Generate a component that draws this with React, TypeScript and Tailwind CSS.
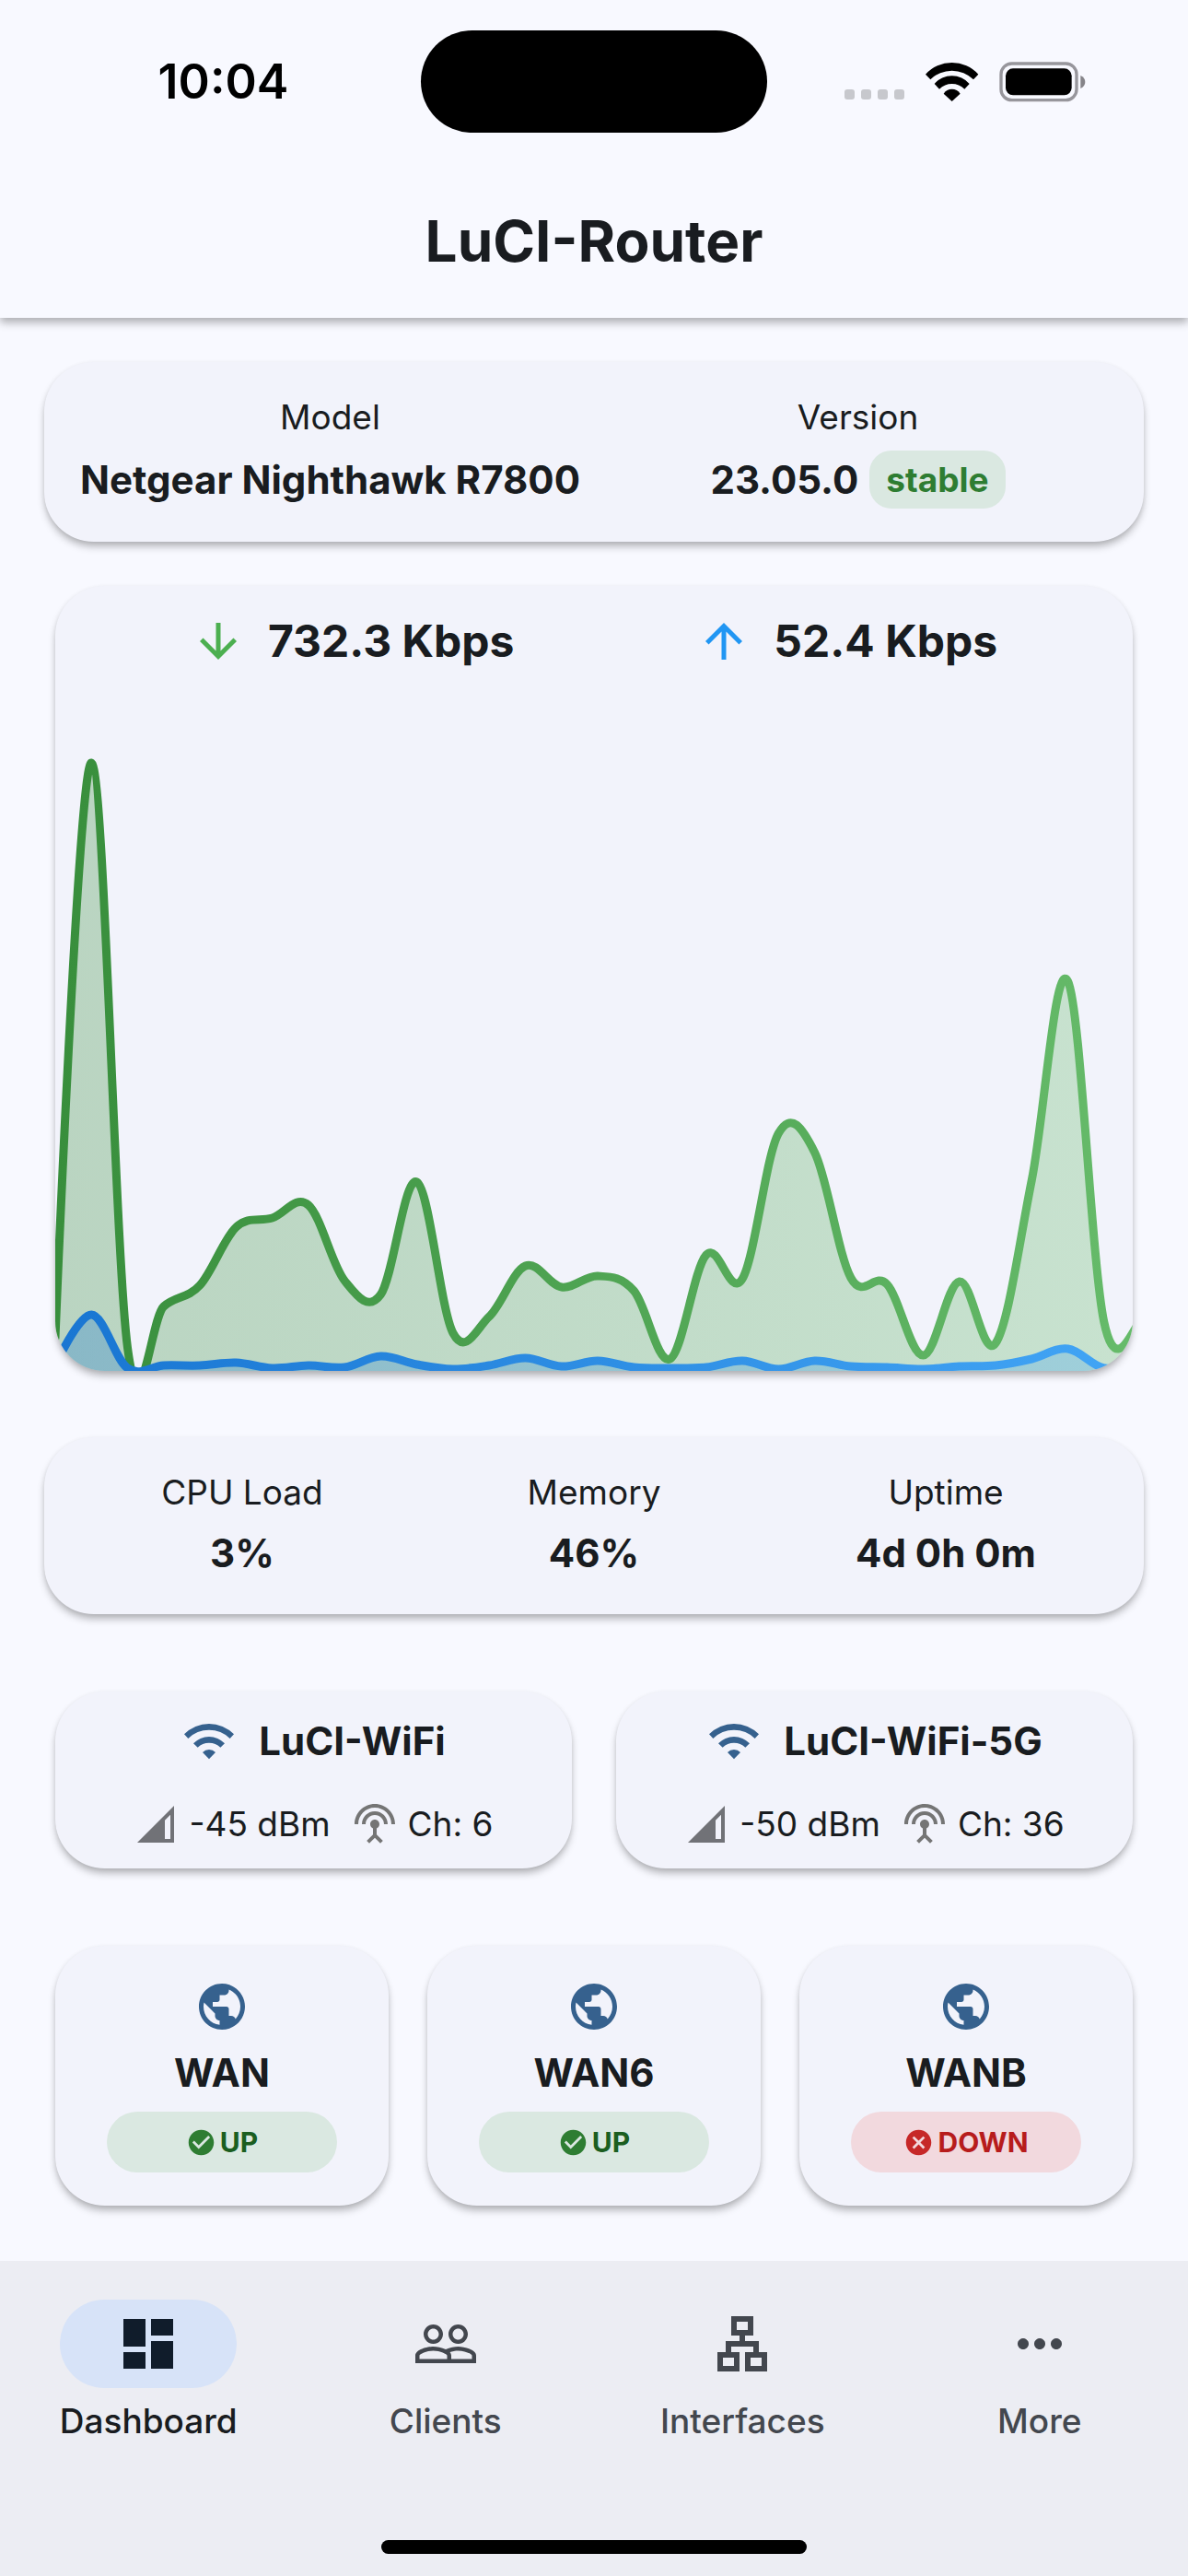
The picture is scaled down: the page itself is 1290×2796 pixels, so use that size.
import React from "react";

const DOWNLOAD = [
  1452, 828, 1463, 1418, 1395, 1332, 1322, 1308, 1390, 1405, 1283, 1447, 1429, 1374, 1397, 1385, 1401, 1475, 1362,
  1388, 1230, 1251, 1387, 1394, 1471, 1391, 1458, 1281, 1065, 1435, 1436,
].map((y) => y - 728);

const UPLOAD = [
  1482, 1427, 1485, 1482, 1482, 1479, 1485, 1482, 1484, 1472, 1481, 1486, 1482, 1474, 1483, 1477, 1484, 1485, 1484,
  1477, 1486, 1477, 1483, 1484, 1486, 1483, 1482, 1475, 1464, 1485, 1480,
].map((y) => y - 728);

const STEP = 39.27;
const SMOOTHNESS = 0.35;

function curve(values: number[]): string {
  let d = `M0 ${values[0]}`;
  let carryX = 0;
  let carryY = 0;
  for (let i = 1; i < values.length; i++) {
    const next = Math.min(i + 1, values.length - 1);
    const tx = (((next - (i - 1)) * STEP) / 2) * SMOOTHNESS;
    const ty = ((values[next] - values[i - 1]) / 2) * SMOOTHNESS;
    d += ` C${(i - 1) * STEP + carryX} ${values[i - 1] + carryY} ${i * STEP - tx} ${values[i] - ty} ${i * STEP} ${values[i]}`;
    carryX = tx;
    carryY = ty;
  }
  return d;
}

function Series({ values, id }: { values: number[]; id: string }) {
  const d = curve(values);
  const end = (values.length - 1) * STEP;
  return (
    <>
      <path d={`${d} L${end} 760 L0 760 Z`} fill={`url(#${id})`} fillOpacity="0.3" />
      <path d={d} fill="none" stroke={`url(#${id})`} strokeWidth="9" strokeLinecap="round" strokeLinejoin="round" />
    </>
  );
}

function TrafficChart() {
  return (
    <svg viewBox="0 0 1170 760" className="block w-full" role="img" aria-label="Network traffic">
      <defs>
        <linearGradient id="down" gradientUnits="userSpaceOnUse" x1="0" y1="0" x2="1170" y2="0">
          <stop offset="0" stopColor="#388e3c" />
          <stop offset="1" stopColor="#66bb6a" />
        </linearGradient>
        <linearGradient id="up" gradientUnits="userSpaceOnUse" x1="0" y1="0" x2="1170" y2="0">
          <stop offset="0" stopColor="#1976d2" />
          <stop offset="1" stopColor="#42a5f5" />
        </linearGradient>
      </defs>
      <Series values={DOWNLOAD} id="down" />
      <Series values={UPLOAD} id="up" />
    </svg>
  );
}

const ICONS = {
  arrowDown: "M20 12l-1.41-1.41L13 16.17V4h-2v12.17l-5.58-5.59L4 12l8 8 8-8z",
  arrowUp: "M4 12l1.41 1.41L11 7.83V20h2V7.83l5.58 5.59L20 12l-8-8-8 8z",
  cell: "M2 22h20V2L2 22zm18-2h-3V9.83l3-3V20z",
  antenna:
    "M12 5c-3.87 0-7 3.13-7 7h2c0-2.76 2.24-5 5-5s5 2.24 5 5h2c0-3.87-3.13-7-7-7zm1 9.29c.88-.39 1.5-1.26 1.5-2.29 0-1.38-1.12-2.5-2.5-2.5S9.5 10.62 9.5 12c0 1.02.62 1.9 1.5 2.29v3.3L7.59 21 9 22.41l3-3 3 3L16.41 21 13 17.59v-3.3zM12 1C5.93 1 1 5.93 1 12h2c0-4.97 4.03-9 9-9s9 4.03 9 9h2c0-6.07-4.93-11-11-11z",
  globe:
    "M12 2C6.48 2 2 6.48 2 12s4.48 10 10 10 10-4.48 10-10S17.52 2 12 2zm-1 17.93c-3.95-.49-7-3.85-7-7.93 0-.62.08-1.21.21-1.79L9 15v1c0 1.1.9 2 2 2v1.93zm6.9-2.54c-.26-.81-1-1.39-1.9-1.39h-1v-3c0-.55-.45-1-1-1H8v-2h2c.55 0 1-.45 1-1V7h2c1.1 0 2-.9 2-2v-.41c2.93 1.19 5 4.06 5 7.41 0 2.08-.8 3.97-2.1 5.39z",
  check:
    "M12 2C6.48 2 2 6.48 2 12s4.48 10 10 10 10-4.48 10-10S17.52 2 12 2zm-2 15l-5-5 1.41-1.41L10 14.17l7.59-7.59L19 8l-9 9z",
  cancel:
    "M12 2C6.47 2 2 6.47 2 12s4.47 10 10 10 10-4.47 10-10S17.53 2 12 2zm5 13.59L15.59 17 12 13.41 8.41 17 7 15.59 10.59 12 7 8.41 8.41 7 12 10.59 15.59 7 17 8.41 13.41 12 17 15.59z",
  dashboard: "M3 13h8V3H3v10zm0 8h8v-6H3v6zm10 0h8V11h-8v10zm0-18v6h8V3h-8z",
  people:
    "M16.5 13c-1.2 0-3.07.34-4.5 1-1.43-.67-3.3-1-4.5-1C5.33 13 1 14.08 1 16.25V19h22v-2.75c0-2.17-4.33-3.25-6.5-3.25zm-4 4.5h-10v-1.25c0-.54 2.56-1.75 5-1.75s5 1.21 5 1.75v1.25zm9 0H14v-1.25c0-.46-.2-.86-.52-1.22.88-.3 1.96-.53 3.02-.53 2.44 0 5 1.21 5 1.75v1.25zM7.5 12c1.93 0 3.5-1.57 3.5-3.5S9.43 5 7.5 5 4 6.57 4 8.5 5.57 12 7.5 12zm0-5.5c1.1 0 2 .9 2 2s-.9 2-2 2-2-.9-2-2 .9-2 2-2zm9 5.5c1.93 0 3.5-1.57 3.5-3.5S18.43 5 16.5 5 13 6.57 13 8.5s1.57 3.5 3.5 3.5zm0-5.5c1.1 0 2 .9 2 2s-.9 2-2 2-2-.9-2-2 .9-2 2-2z",
  lan: "M8 2h8v7h-3v2h5v4h3v7h-8v-7h3v-2H8v2h3v7H3v-7h3v-4h5V9H8zM10 4v3h4V4zM5 17v3h4v-3zM15 17v3h4v-3z",
  more: "M6 10c-1.1 0-2 .9-2 2s.9 2 2 2 2-.9 2-2-.9-2-2-2zm12 0c-1.1 0-2 .9-2 2s.9 2 2 2 2-.9 2-2-.9-2-2-2zm-6 0c-1.1 0-2 .9-2 2s.9 2 2 2 2-.9 2-2-.9-2-2-2z",
};

function Icon({ name, className }: { name: keyof typeof ICONS; className: string }) {
  return (
    <svg viewBox="0 0 24 24" fill="currentColor" fillRule="evenodd" className={`shrink-0 ${className}`} aria-hidden="true">
      <path d={ICONS[name]} />
    </svg>
  );
}

function WifiIcon() {
  return (
    <svg viewBox="193 58 180 129" className="h-[43px] w-[60px] shrink-0" fill="#36618e" aria-hidden="true">
      <path d="M202 98A113.500 113.500 0 0 1 364 98L351 112A96.600 96.600 0 0 0 215 112Z" />
      <path d="M232 128A70 70 0 0 1 334 128L320 141A53 53 0 0 0 246 141Z" />
      <path d="M262 157A29 29 0 0 1 304 157L283 179Z" />
    </svg>
  );
}

function StatusBar() {
  return (
    <div className="grid h-[177px] grid-cols-[1fr_376px_1fr] items-center">
      <div className="pl-7 text-center text-[52px] leading-[60px] font-semibold text-black">10:04</div>
      <div className="h-[111px] rounded-full bg-black" />
      <div className="flex items-center justify-center pr-7">
        <div className="mt-7 mr-[22px] flex gap-[7px]">
          {[0, 1, 2, 3].map((i) => (
            <span key={i} className="size-[11px] rounded-[3px] bg-[#c7c8cd]" />
          ))}
        </div>
        <svg viewBox="369 72 177 132" className="mr-[22px] h-11 w-[59px]" fill="#000" aria-label="Wi-Fi">
          <path d="M372 113A116 116 0 0 1 544 113L528 130A99 99 0 0 0 388 130Z" />
          <path d="M401 144A75 75 0 0 1 515 144L499 161A58 58 0 0 0 417 161Z" />
          <path d="M431 176A32 32 0 0 1 485 176L458 201Z" />
        </svg>
        <svg viewBox="611 74 282 132" className="h-11 w-[94px]" aria-label="Battery full">
          <rect x="617" y="80" width="246" height="119" rx="35" fill="none" stroke="#97969c" strokeWidth="10" />
          <rect x="632" y="96" width="215" height="87" rx="24" fill="#000" />
          <path d="M876 119Q891 126 891 140T876 161Z" fill="#858489" />
        </svg>
      </div>
    </div>
  );
}

function Card({ className, children }: { className: string; children: React.ReactNode }) {
  return (
    <section
      className={`rounded-[54px] bg-[#f2f3fb] shadow-[0_6px_9px_-1px_rgba(0,0,0,0.28),0_1px_5px_rgba(0,0,0,0.06)] ${className}`}
    >
      {children}
    </section>
  );
}

function Stat({ label, children }: { label: string; children: React.ReactNode }) {
  return (
    <div className="flex flex-col items-center gap-3">
      <span className="text-[37px] leading-[48px]">{label}</span>
      {children}
    </div>
  );
}

const VALUE = "text-[42px] leading-[60px] font-bold whitespace-nowrap";

function WifiCard({ name, signal, channel }: { name: string; signal: string; channel: string }) {
  return (
    <Card className="flex flex-col items-center gap-9 py-6">
      <div className="flex items-center gap-6">
        <WifiIcon />
        <h2 className={VALUE}>{name}</h2>
      </div>
      <div className="flex items-center gap-3 text-[37px] leading-[48px] whitespace-nowrap">
        <Icon name="cell" className="size-12 text-[#717277]" />
        <span>{signal}</span>
        <Icon name="antenna" className="ml-3 size-12 text-[#757575]" />
        <span>{channel}</span>
      </div>
    </Card>
  );
}

function WanCard({ name, up }: { name: string; up: boolean }) {
  return (
    <Card className="flex flex-col items-center gap-3 px-14 py-9">
      <Icon name="globe" className="size-[60px] text-[#36618e]" />
      <h2 className={VALUE}>{name}</h2>
      <div
        className={`flex h-[66px] w-full items-center justify-center gap-1 rounded-full text-[30px] leading-9 font-bold ${
          up ? "bg-[#dae8e1] text-[#1b5e20]" : "bg-[#f2d9de] text-[#b71c1c]"
        }`}
      >
        <Icon name={up ? "check" : "cancel"} className={up ? "size-[33px] text-[#2e7d32]" : "size-[33px] text-[#c62828]"} />
        {up ? "UP" : "DOWN"}
      </div>
    </Card>
  );
}

function NavItem({ icon, label, active }: { icon: keyof typeof ICONS; label: string; active?: boolean }) {
  return (
    <button
      type="button"
      aria-current={active ? "page" : undefined}
      className={`flex flex-col items-center gap-3 text-[37px] leading-[48px] font-medium ${active ? "text-[#191c20]" : "text-[#43474e]"}`}
    >
      <span
        className={`flex h-24 w-48 items-center justify-center rounded-full ${active ? "bg-[#d7e3f8] text-[#101c2b]" : ""}`}
      >
        <Icon name={icon} className="size-[72px]" />
      </span>
      {label}
    </button>
  );
}

export default function App() {
  return (
    <div className="flex min-h-screen flex-col bg-[#f8f9ff] font-['Inter',sans-serif] text-[#191c20]">
      <header className="shadow-[0_5px_9px_rgba(0,0,0,0.3)]">
        <StatusBar />
        <h1 className="h-[168px] text-center text-[62px] leading-[170px] font-bold">LuCI-Router</h1>
      </header>

      <main className="flex flex-1 flex-col px-12 pt-12 pb-[60px]">
        <Card className="grid grid-cols-2 px-6 py-9">
          <Stat label="Model">
            <span className="text-[42px] leading-[63px] font-bold whitespace-nowrap">Netgear Nighthawk R7800</span>
          </Stat>
          <Stat label="Version">
            <div className="flex items-center gap-3">
              <span className="text-[42px] leading-[63px] font-bold">23.05.0</span>
              <span className="rounded-3xl bg-[#dae8e1] px-[18px] text-[37px] leading-[63px] font-bold text-[#2e7d32]">
                stable
              </span>
            </div>
          </Stat>
        </Card>

        <Card className="mx-3 mt-12 overflow-hidden pt-[30px]">
          <div className="mb-0.5 flex justify-around px-12 text-[48px] leading-[60px] font-bold">
            <div className="flex items-center gap-6">
              <Icon name="arrowDown" className="size-[60px] text-[#4caf50]" />
              732.3 Kbps
            </div>
            <div className="flex items-center gap-6">
              <Icon name="arrowUp" className="size-[60px] text-[#2196f3]" />
              52.4 Kbps
            </div>
          </div>
          <TrafficChart />
        </Card>

        <Card className="mt-[72px] grid grid-cols-3 px-6 py-9">
          <Stat label="CPU Load">
            <span className={VALUE}>3%</span>
          </Stat>
          <Stat label="Memory">
            <span className={VALUE}>46%</span>
          </Stat>
          <Stat label="Uptime">
            <span className={VALUE}>4d 0h 0m</span>
          </Stat>
        </Card>

        <div className="mx-3 mt-[84px] grid grid-cols-2 gap-12">
          <WifiCard name="LuCI-WiFi" signal="-45 dBm" channel="Ch: 6" />
          <WifiCard name="LuCI-WiFi-5G" signal="-50 dBm" channel="Ch: 36" />
        </div>

        <div className="mx-3 mt-[84px] grid grid-cols-3 gap-[42px]">
          <WanCard name="WAN" up />
          <WanCard name="WAN6" up />
          <WanCard name="WANB" up={false} />
        </div>
      </main>

      <footer className="bg-[#ecedf3] pt-[42px] pb-6">
        <nav className="grid grid-cols-4">
          <NavItem icon="dashboard" label="Dashboard" active />
          <NavItem icon="people" label="Clients" />
          <NavItem icon="lan" label="Interfaces" />
          <NavItem icon="more" label="More" />
        </nav>
        <div className="mx-auto mt-[105px] h-[15px] w-[462px] rounded-full bg-black" />
      </footer>
    </div>
  );
}
